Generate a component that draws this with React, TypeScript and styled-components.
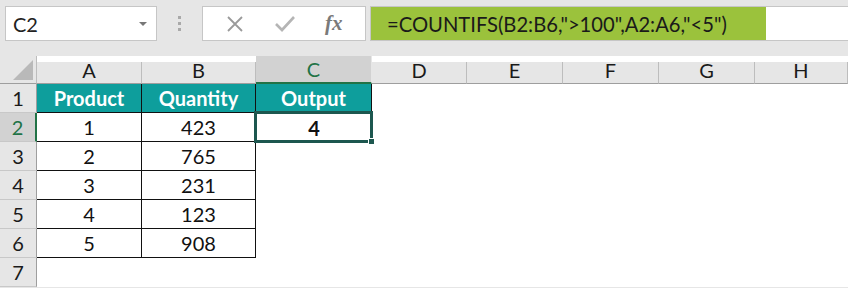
import React from "react";
import styled, { createGlobalStyle } from "styled-components";

const GlobalStyle = createGlobalStyle`
  html, body {
    margin: 0;
    padding: 0;
    background: #e6e6e6;
    width: 848px;
    height: 288px;
    overflow: hidden;
  }
`;

const Page = styled.div`
  width: 848px;
  height: 288px;
  background: #e6e6e6;
  font-family: Lato, "Open Sans", sans-serif;
`;

const Toolbar = styled.div`
  height: 56px;
  display: flex;
  align-items: flex-start;
  padding-top: 6px;
  box-sizing: border-box;
`;

const NameBox = styled.div`
  margin-left: 5px;
  width: 152px;
  height: 35px;
  box-sizing: border-box;
  background: #fff;
  border: 1px solid #c6c6c6;
  display: flex;
  align-items: center;
  justify-content: space-between;
  padding: 0 9px 0 7px;
  font-size: 20px;
  color: #222;
`;

const Caret = styled.span`
  width: 0;
  height: 0;
  border-left: 4px solid transparent;
  border-right: 4px solid transparent;
  border-top: 4px solid #777;
`;

const Grip = styled.div`
  width: 45px;
  height: 35px;
  display: flex;
  flex-direction: column;
  align-items: center;
  justify-content: center;
  gap: 3px;
`;

const Dot = styled.span`
  width: 3px;
  height: 3px;
  background: #a9a9a9;
`;

const FormulaButtons = styled.div`
  width: 164px;
  height: 35px;
  box-sizing: border-box;
  background: #fff;
  border: 1px solid #c6c6c6;
  display: flex;
  align-items: center;
  justify-content: space-around;
  padding: 0 8px;
`;

const Fx = styled.span`
  font-family: "Liberation Serif", serif;
  font-style: italic;
  font-weight: bold;
  font-size: 21px;
  color: #7a7a7a;
`;

const FormulaBar = styled.div`
  margin-left: 4px;
  flex: 1;
  height: 35px;
  box-sizing: border-box;
  background: #fff;
  border: 1px solid #c6c6c6;
  border-right: none;
  display: flex;
`;

const FormulaText = styled.div`
  width: 395px;
  background: #9bc23c;
  display: flex;
  align-items: center;
  padding-left: 16px;
  box-sizing: border-box;
  font-size: 20.2px;
  color: #1a1a1a;
  white-space: nowrap;
`;

const Sheet = styled.div`
  display: grid;
  grid-template-columns: 37px 105px 114px 116px 95px 96px 96px 96px 1fr;
  grid-template-rows: 28px repeat(7, 29px);
  background: #fff;
`;

const Corner = styled.div`
  background: #e6e6e6;
  border-right: 1px solid #bdbdbd;
  border-bottom: 1px solid #9e9e9e;
  position: relative;
  box-sizing: border-box;
  &::after {
    content: "";
    position: absolute;
    right: 3px;
    bottom: 3px;
    width: 0;
    height: 0;
    border-left: 20px solid transparent;
    border-bottom: 20px solid #b9b9b9;
  }
`;

const ColHead = styled.div<{ $active?: boolean }>`
  background: ${p => (p.$active ? "#d2d2d2" : "#e6e6e6")};
  border-right: 1px solid ${p => (p.$active ? "#e6e6e6" : "#bdbdbd")};
  border-bottom: ${p => (p.$active ? "2px solid #217346" : "1px solid #9e9e9e")};
  margin-top: ${p => (p.$active ? "0" : "6px")};
  box-sizing: border-box;
  display: flex;
  align-items: flex-end;
  justify-content: center;
  padding-bottom: 1px;
  font-size: 20px;
  color: ${p => (p.$active ? "#217346" : "#1a1a1a")};
`;

const RowHead = styled.div<{ $active?: boolean }>`
  background: ${p => (p.$active ? "#d2d2d2" : "#e6e6e6")};
  border-right: ${p => (p.$active ? "2px solid #217346" : "1px solid #9e9e9e")};
  border-bottom: 1px solid #c8c8c8;
  box-sizing: border-box;
  display: flex;
  align-items: center;
  justify-content: center;
  font-size: 20px;
  color: ${p => (p.$active ? "#217346" : "#1a1a1a")};
`;

const Cell = styled.div<{ $head?: boolean; $bordered?: boolean; $selected?: boolean }>`
  box-sizing: border-box;
  background: ${p => (p.$head ? "#0e9e9c" : "#fff")};
  color: ${p => (p.$head ? "#fff" : "#111")};
  font-weight: ${p => (p.$head || p.$selected ? "bold" : "normal")};
  border-right: ${p => (p.$bordered ? "1px solid #111" : "none")};
  border-bottom: ${p => (p.$bordered ? "1px solid #111" : "none")};
  display: flex;
  align-items: center;
  justify-content: center;
  font-size: 20px;
  position: relative;
  z-index: ${p => (p.$selected ? 2 : "auto")};
`;

const Selection = styled.div`
  position: absolute;
  left: -2px;
  top: -2px;
  right: -1px;
  bottom: -1px;
  border: 3px solid #1d574f;
  pointer-events: none;
  &::after {
    content: "";
    position: absolute;
    right: -5px;
    bottom: -5px;
    width: 5px;
    height: 5px;
    background: #1d574f;
    border: 1px solid #fff;
  }
`;

const columns = ["A", "B", "C", "D", "E", "F", "G", "H"];
const data = [
  [1, 423],
  [2, 765],
  [3, 231],
  [4, 123],
  [5, 908],
];

function XIcon() {
  return (
    <svg width="20" height="20" viewBox="0 0 20 20">
      <path d="M3 3 L17 17 M17 3 L3 17" stroke="#9a9a9a" strokeWidth="1.8" fill="none" />
    </svg>
  );
}

function CheckIcon() {
  return (
    <svg width="22" height="20" viewBox="0 0 22 20">
      <path d="M2 10 L8 16 L20 3" stroke="#b5b5b5" strokeWidth="2.6" fill="none" />
    </svg>
  );
}

export default function App() {
  return (
    <Page>
      <GlobalStyle />
      <Toolbar>
        <NameBox>
          <span>C2</span>
          <Caret />
        </NameBox>
        <Grip>
          <Dot />
          <Dot />
          <Dot />
        </Grip>
        <FormulaButtons>
          <XIcon />
          <CheckIcon />
          <Fx>fx</Fx>
        </FormulaButtons>
        <FormulaBar>
          <FormulaText>=COUNTIFS(B2:B6,"&gt;100",A2:A6,"&lt;5")</FormulaText>
        </FormulaBar>
      </Toolbar>
      <Sheet>
        <Corner />
        {columns.map(c => (
          <ColHead key={c} $active={c === "C"}>{c}</ColHead>
        ))}
        <RowHead>1</RowHead>
        <Cell $head $bordered>Product</Cell>
        <Cell $head $bordered>Quantity</Cell>
        <Cell $head $bordered>Output</Cell>
        {columns.slice(3).map(c => <Cell key={c} />)}
        {data.map(([p, q], i) => (
          <React.Fragment key={i}>
            <RowHead $active={i === 0}>{i + 2}</RowHead>
            <Cell $bordered>{p}</Cell>
            <Cell $bordered>{q}</Cell>
            {i === 0 ? (
              <Cell $selected>
                4
                <Selection />
              </Cell>
            ) : (
              <Cell />
            )}
            {columns.slice(3).map(c => <Cell key={c} />)}
          </React.Fragment>
        ))}
        <RowHead>7</RowHead>
        {columns.map(c => <Cell key={c} />)}
      </Sheet>
    </Page>
  );
}
